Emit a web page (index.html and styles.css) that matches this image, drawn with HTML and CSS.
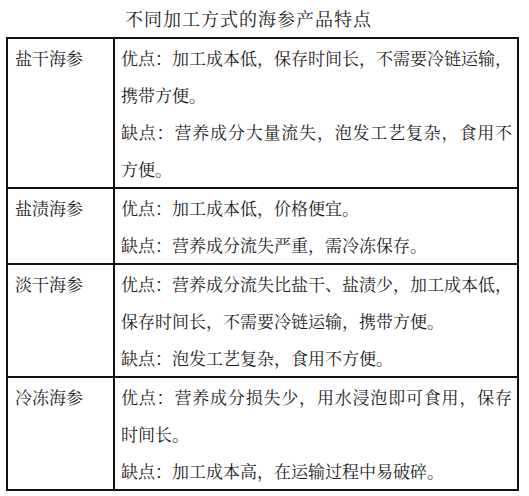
FILE: index.html
```html
<!DOCTYPE html>
<html lang="zh-CN">
<head>
<meta charset="utf-8">
<title>不同加工方式的海参产品特点</title>
<link rel="stylesheet" href="styles.css">
</head>
<body>
<div class="page">
  <div class="title">不同加工方式的海参产品特点</div>
  <div class="table">
    <div class="name">盐干海参</div>
    <div class="desc">
      <span class="ln full">优点：加工成本低，保存时间长，不需要冷链运输，</span>
      <span class="ln">携带方便。</span>
      <span class="ln full">缺点：营养成分大量流失，泡发工艺复杂，食用不</span>
      <span class="ln">方便。</span>
    </div>
    <div class="name">盐渍海参</div>
    <div class="desc">
      <span class="ln">优点：加工成本低，价格便宜。</span>
      <span class="ln">缺点：营养成分流失严重，需冷冻保存。</span>
    </div>
    <div class="name">淡干海参</div>
    <div class="desc">
      <span class="ln full">优点：营养成分流失比盐干、盐渍少，加工成本低，</span>
      <span class="ln">保存时间长，不需要冷链运输，携带方便。</span>
      <span class="ln">缺点：泡发工艺复杂，食用不方便。</span>
    </div>
    <div class="name">冷冻海参</div>
    <div class="desc">
      <span class="ln full">优点：营养成分损失少，用水浸泡即可食用，保存</span>
      <span class="ln">时间长。</span>
      <span class="ln">缺点：加工成本高，在运输过程中易破碎。</span>
    </div>
  </div>
</div>
</body>
</html>
```

FILE: styles.css
```css
* {
  box-sizing: border-box;
}

html, body {
  margin: 0;
  padding: 0;
  background: #ffffff;
}

body {
  font-family: "Noto Serif CJK SC", "Noto Sans CJK SC", "Liberation Serif", serif;
  color: #1c1c1c;
}

.page {
  width: 529px;
}

.title {
  width: 497px;
  height: 37px;
  line-height: 37px;
  text-align: center;
  font-size: 18px;
  letter-spacing: 1px;
}

.table {
  margin-left: 6px;
  width: 513px;
  display: grid;
  grid-template-columns: 107px 1fr;
  border-top: 2px solid #111;
  border-left: 2px solid #111;
  font-size: 17px;
  line-height: 37px;
}

.name,
.desc {
  border-right: 2px solid #111;
  border-bottom: 2px solid #111;
}

.name {
  padding-left: 7px;
}

.desc {
  padding-left: 6px;
  padding-right: 5px;
}

.ln {
  display: block;
  white-space: nowrap;
}

.ln.full {
  text-align: justify;
  text-align-last: justify;
}
```
